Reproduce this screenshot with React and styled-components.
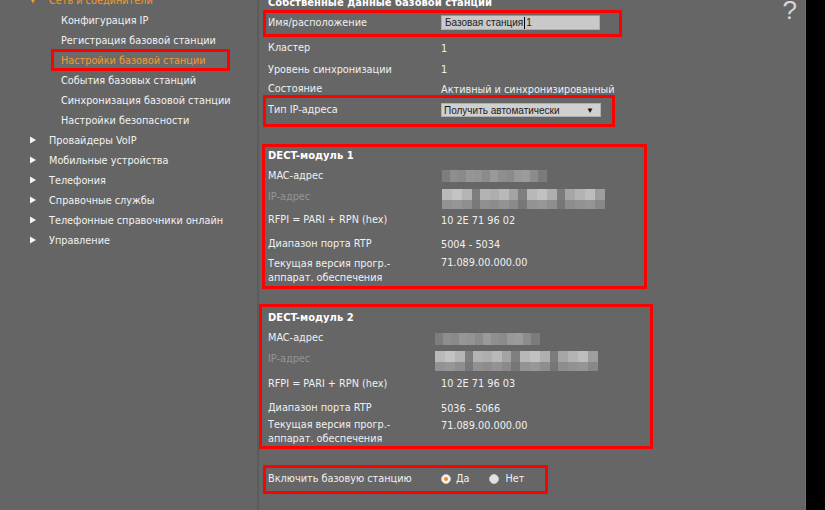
import React from 'react';
import styled, { createGlobalStyle } from 'styled-components';

const GlobalStyle = createGlobalStyle`
  html, body { margin: 0; padding: 0; background: #000; overflow: hidden; }
  body {
    font-family: "DejaVu Sans Condensed", "DejaVu Sans", Verdana, sans-serif;
    font-stretch: condensed;
  }
  * { box-sizing: border-box; }
`;

const Page = styled.div`
  display: flex;
  width: 825px;
  height: 510px;
  overflow: hidden;
  background: #000;
`;

const Sidebar = styled.nav`
  flex: none;
  width: 259px;
  background: #656565;
  border-right: 2px solid #5b5b5b;
  overflow: hidden;
`;

const NavList = styled.ul`
  list-style: none;
  margin: -10px 0 0;
  padding: 0;
`;

const NavItem = styled.li`
  display: flex;
  align-items: center;
  height: 20px;
  padding-left: ${p => (p.$sub ? '52px' : '29px')};
  font-size: 10.8px;
  color: ${p => (p.$active ? '#f39a2c' : '#f2f2f2')};
  white-space: nowrap;
`;

const NavLabel = styled.span`
  display: flex;
  align-items: center;
  height: 20px;
  padding-left: 9px;
  width: ${p => (p.$selected ? '177px' : 'auto')};
  background: ${p => (p.$selected ? '#6a6a6a' : 'transparent')};
  outline: ${p => (p.$selected ? '3px solid #ff0000' : 'none')};
  outline-offset: -2px;
`;

const Arrow = styled.svg`
  flex: none;
  width: 8px;
  height: 8px;
  margin-right: 12px;
`;

const Main = styled.main`
  position: relative;
  flex: none;
  width: 547px;
  background: #666666;
  border-right: 1px solid #6e6e6e;
  overflow: hidden;
`;

const Content = styled.div`
  display: flex;
  flex-direction: column;
  align-items: flex-start;
  margin-top: -8px;
  padding-left: 4px;
  font-size: 10.8px;
  color: #f0f0f0;
`;

const Title = styled.div`
  display: flex;
  align-items: center;
  height: 20px;
  padding-left: 5px;
  font-family: "DejaVu Sans", Verdana, sans-serif;
  font-stretch: normal;
  font-size: 10px;
  font-weight: bold;
  color: #ffffff;
  white-space: nowrap;
`;

const Box = styled.section`
  display: flex;
  flex-direction: column;
  width: ${p => p.$w}px;
  margin-top: ${p => p.$mt || 0}px;
  margin-left: ${p => p.$ml || 0}px;
  padding-left: ${p => p.$pl || 2}px;
  padding-bottom: ${p => p.$pb || 0}px;
  border: 3px solid #ff0000;
`;

const Row = styled.div`
  display: flex;
  align-items: center;
  height: ${p => p.$h}px;
  padding-left: ${p => (p.$plain ? '5px' : '0')};
  white-space: nowrap;
`;

const BoxTitle = styled.div`
  display: flex;
  align-items: center;
  height: ${p => p.$h}px;
  font-family: "DejaVu Sans", Verdana, sans-serif;
  font-stretch: normal;
  font-size: 10px;
  font-weight: bold;
  color: #ffffff;
`;

const Label = styled.div`
  flex: none;
  width: 173px;
  line-height: 14px;
  color: ${p => (p.$muted ? '#959595' : '#f0f0f0')};
  white-space: normal;
`;

const Value = styled.div`
  color: #f0f0f0;
  align-self: ${p => (p.$top ? 'flex-start' : 'auto')};
  margin-top: ${p => (p.$top ? '1px' : '0')};
`;

const TextField = styled.div`
  display: flex;
  align-items: center;
  width: 159px;
  height: 15px;
  padding-left: 3px;
  background: #c9c9c9;
  border: 1px solid #a9b29f;
  border-top-color: #8f988a;
  font-family: "Liberation Sans", Arial, sans-serif;
  font-stretch: normal;
  font-size: 10px;
  color: #1c1c1c;
`;

const Caret = styled.span`
  display: inline-block;
  width: 1px;
  height: 12px;
  margin: 0 1px 0 1px;
  background: #000;
`;

const Select = styled.div`
  display: flex;
  align-items: center;
  justify-content: space-between;
  width: 160px;
  height: 14px;
  padding: 0 6px 0 2px;
  background: #d0d0d0;
  border: 1px solid #b0b0b0;
  font-family: "Liberation Sans", Arial, sans-serif;
  font-stretch: normal;
  font-size: 10px;
  color: #1a1a1a;
`;

const SelectArrow = styled.span`
  font-size: 8px;
  color: #111;
`;

const Blur = styled.div`
  display: flex;
  flex-direction: column;
  margin-left: ${p => p.$ml || 0}px;
  margin-top: ${p => p.$mt || 0}px;
`;

const BlurRow = styled.div`
  display: flex;
  height: ${p => p.$h}px;
`;

const BlurCell = styled.div`
  flex: none;
  height: 100%;
  filter: blur(0.6px);
`;

const RadioGroup = styled.div`
  display: flex;
  align-items: center;
`;

const RadioOption = styled.label`
  display: flex;
  align-items: center;
  margin-right: 19px;
  color: #f0f0f0;
`;

const RadioDot = styled.span`
  display: flex;
  align-items: center;
  justify-content: center;
  width: 10px;
  height: 10px;
  margin-right: ${p => (p.$checked ? 5 : 7)}px;
  border-radius: 50%;
  background: ${p => (p.$checked ? '#f4f4f4' : '#e2e2e2')};
  border: 1px solid #c8c8c8;
  &::after {
    content: '';
    display: ${p => (p.$checked ? 'block' : 'none')};
    width: 4px;
    height: 4px;
    border-radius: 50%;
    background: #f08a1c;
  }
`;

const Help = styled.div`
  position: absolute;
  top: -5px;
  right: 8px;
  font-family: "Liberation Sans", Arial, sans-serif;
  font-stretch: normal;
  font-size: 26px;
  color: #d6d6d6;
`;

const macCells = [
  [8, '#7d7d7d'], [8, '#8e8e8e'], [8, '#8a8a8a'], [8, '#969696'], [8, '#939393'],
  [8, '#8b8b8b'], [8, '#999999'], [8, '#8f8f8f'], [8, '#8a8a8a'], [8, '#989898'],
  [8, '#9b9b9b'], [8, '#8c8c8c'], [9, '#7b7b7b'],
];

const ipTop = [
  [10, '#b9b9b9'], [10, '#c3c3c3'], [10, '#b4b4b4'], [8, '#7e7e7e'],
  [10, '#b3b3b3'], [9, '#aeaeae'], [10, '#b9b9b9'], [9, '#a4a4a4'], [9, '#7f7f7f'],
  [10, '#b8b8b8'], [10, '#c1c1c1'], [10, '#afafaf'], [8, '#7c7c7c'],
  [10, '#a6a6a6'], [10, '#b3b3b3'], [10, '#bdbdbd'], [10, '#9e9e9e'],
];

const ipBottom = [
  [10, '#929292'], [10, '#969696'], [10, '#8f8f8f'], [8, '#787878'],
  [10, '#909090'], [9, '#8c8c8c'], [10, '#939393'], [9, '#8a8a8a'], [9, '#777777'],
  [10, '#939393'], [10, '#979797'], [10, '#8e8e8e'], [8, '#767676'],
  [10, '#8d8d8d'], [10, '#929292'], [10, '#959595'], [10, '#888888'],
];

function PixelBlur({ rows, ml, mt }) {
  return (
    <Blur $ml={ml} $mt={mt}>
      {rows.map((r, i) => (
        <BlurRow key={i} $h={r.h}>
          {r.cells.map(([w, c], j) => (
            <BlurCell key={j} style={{ width: w, background: c }} />
          ))}
        </BlurRow>
      ))}
    </Blur>
  );
}

const MacBlur = ({ ml }) => (
  <PixelBlur ml={ml} mt={1} rows={[{ h: 12, cells: macCells }]} />
);

const IpBlur = ({ ml }) => (
  <PixelBlur
    ml={ml}
    mt={4}
    rows={[
      { h: 11, cells: ipTop },
      { h: 9, cells: ipBottom },
    ]}
  />
);

const RightArrow = () => (
  <Arrow viewBox="0 0 8 8">
    <path d="M1 0.5 L7 4 L1 7.5 Z" fill="#f4f4f4" />
  </Arrow>
);

const DownArrow = () => (
  <Arrow viewBox="0 0 8 8">
    <path d="M0.5 1 L7.5 1 L4 7.5 Z" fill="#f39a2c" />
  </Arrow>
);

const subItems = [
  'Конфигурация IP',
  'Регистрация базовой станции',
  'Настройки базовой станции',
  'События базовых станций',
  'Синхронизация базовой станции',
  'Настройки безопасности',
];

const topItems = [
  'Провайдеры VoIP',
  'Мобильные устройства',
  'Телефония',
  'Справочные службы',
  'Телефонные справочники онлайн',
  'Управление',
];

function DectModule({ n, rfpi, rtp, w, mt, ml, pl, heights, blurMl }) {
  const [th, mh, ih, rh, ph, vh] = heights;
  return (
    <Box $w={w} $mt={mt} $ml={ml} $pl={pl}>
      <BoxTitle $h={th}>DECT-модуль {n}</BoxTitle>
      <Row $h={mh}>
        <Label>MAC-адрес</Label>
        <MacBlur ml={blurMl} />
      </Row>
      <Row $h={ih}>
        <Label $muted>IP-адрес</Label>
        <IpBlur ml={blurMl} />
      </Row>
      <Row $h={rh}>
        <Label>RFPI = PARI + RPN (hex)</Label>
        <Value>{rfpi}</Value>
      </Row>
      <Row $h={ph}>
        <Label>Диапазон порта RTP</Label>
        <Value>{rtp}</Value>
      </Row>
      <Row $h={vh}>
        <Label>Текущая версия прогр.-<br />аппарат. обеспечения</Label>
        <Value $top>71.089.00.000.00</Value>
      </Row>
    </Box>
  );
}

export default function App() {
  return (
    <Page>
      <GlobalStyle />
      <Sidebar>
        <NavList>
          <NavItem $active>
            <DownArrow />
            Сеть и соединители
          </NavItem>
          {subItems.map(t => (
            <NavItem key={t} $sub $active={t === 'Настройки базовой станции'}>
              <NavLabel $selected={t === 'Настройки базовой станции'}>{t}</NavLabel>
            </NavItem>
          ))}
          {topItems.map(t => (
            <NavItem key={t}>
              <RightArrow />
              {t}
            </NavItem>
          ))}
        </NavList>
      </Sidebar>
      <Main>
        <Help>?</Help>
        <Content>
          <Title>Собственные данные базовой станции</Title>
          <Box $w={359} $mt={-2} $pb={2}>
            <Row $h={19}>
              <Label>Имя/расположение</Label>
              <TextField>
                Базовая станция<Caret />1
              </TextField>
            </Row>
          </Box>
          <Row $h={22} $plain>
            <Label>Кластер</Label>
            <Value>1</Value>
          </Row>
          <Row $h={21} $plain>
            <Label>Уровень синхронизации</Label>
            <Value>1</Value>
          </Row>
          <Row $h={18} $plain>
            <Label>Состояние</Label>
            <Value>Активный и синхронизированный</Value>
          </Row>
          <Box $w={352} $mt={-3} $pb={2}>
            <Row $h={24}>
              <Label>Тип IP-адреса</Label>
              <Select>
                Получить автоматически
                <SelectArrow>▼</SelectArrow>
              </Select>
            </Row>
          </Box>
          <DectModule
            n={1}
            rfpi="10 2E 71 96 02"
            rtp="5004 - 5034"
            w={385}
            mt={17}
            ml={-1}
            pl={3}
            heights={[17, 23, 20, 26, 22, 31]}
            blurMl={1}
          />
          <DectModule
            n={2}
            rfpi="10 2E 71 96 03"
            rtp="5036 - 5066"
            w={394}
            mt={15}
            ml={-4}
            pl={6}
            heights={[20, 22, 20, 29, 20, 28]}
            blurMl={-6}
          />
          <Box $w={285} $mt={16} $pb={2}>
            <Row $h={21}>
              <Label>Включить базовую станцию</Label>
              <RadioGroup>
                <RadioOption>
                  <RadioDot $checked />
                  Да
                </RadioOption>
                <RadioOption>
                  <RadioDot />
                  Нет
                </RadioOption>
              </RadioGroup>
            </Row>
          </Box>
        </Content>
      </Main>
    </Page>
  );
}
